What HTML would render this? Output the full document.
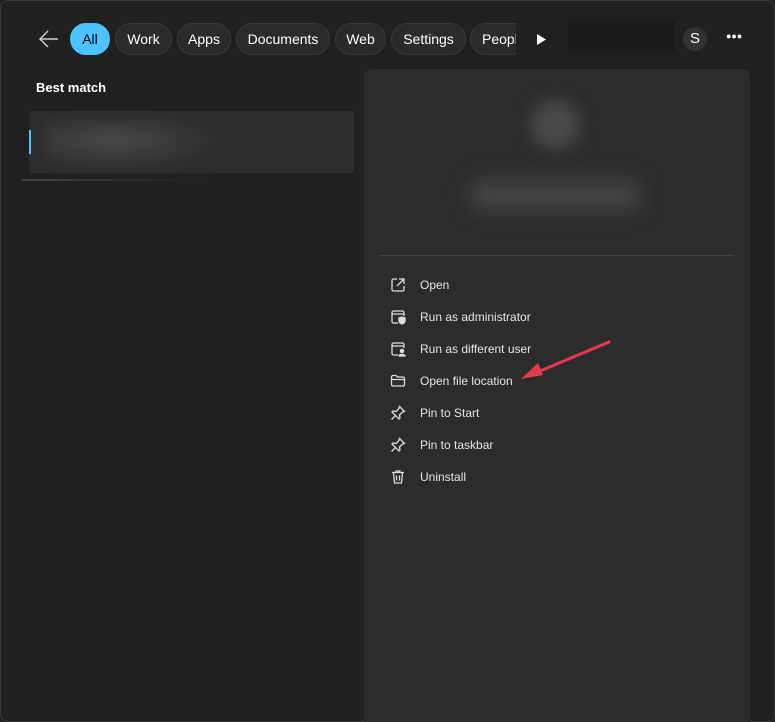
<!DOCTYPE html>
<html style="overflow:hidden"><head><style>
*{margin:0;padding:0;box-sizing:border-box}
html,body{width:775px;height:722px;overflow:hidden}
body{background:#202020;font-family:"Liberation Sans",sans-serif;position:relative;color:#fff}
.chip{position:absolute;top:23px;height:32px;border:1px solid #3a3a3a;background:#2b2b2b;border-radius:16px;font-size:14px;line-height:30px;text-align:center;color:#fff}
.item{position:absolute;left:390px;font-size:12px;color:#e6e6e6;height:20px;line-height:20px}
.item span{position:absolute;left:30px;white-space:nowrap}
.item svg{position:absolute;left:0;top:2px}
</style></head><body>
<div style="position:absolute;left:0;top:0;width:775px;height:722px;border:1px solid #3a3a3a;border-radius:8px"></div>
<svg style="position:absolute;left:38px;top:29px" width="22" height="20" viewBox="0 0 22 20"><path d="M20 10H3M10 2L2 10l8 8" fill="none" stroke="#ccc" stroke-width="1.5"/></svg>
<div class="chip" style="left:70px;width:40px;background:#4cc2ff;border-color:#4cc2ff;color:#000">All</div>
<div class="chip" style="left:115px;width:57px">Work</div>
<div class="chip" style="left:177px;width:54px">Apps</div>
<div class="chip" style="left:236px;width:94px">Documents</div>
<div class="chip" style="left:335px;width:51px">Web</div>
<div class="chip" style="left:391px;width:75px">Settings</div>
<div class="chip" style="left:470px;width:60px;text-align:left;padding-left:11px">People</div>
<div style="position:absolute;left:516px;top:20px;width:50px;height:36px;background:#202020"></div>
<svg style="position:absolute;left:536px;top:33px" width="12" height="13"><path d="M1 1L10 6.5L1 12Z" fill="#fff"/></svg>
<div style="position:absolute;left:568px;top:20px;width:107px;height:33px;background:#1b1b1b"></div>
<div style="position:absolute;left:683px;top:27px;width:24px;height:24px;border-radius:12px;background:#333;font-size:15px;line-height:24px;text-align:center">S</div>
<div style="position:absolute;left:726px;top:31px;font-size:9px;letter-spacing:0px">●●●</div>
<div style="position:absolute;left:36px;top:80px;font-size:13px;font-weight:bold">Best match</div>
<div style="position:absolute;left:29px;top:111px;width:325px;height:62px;background:#2d2d2d;border-radius:4px"></div>
<div style="position:absolute;left:45px;top:120px;width:170px;height:50px;background:radial-gradient(ellipse at 40% 40%,#4a4a4a,#2d2d2d 75%);filter:blur(6px)"></div>
<div style="position:absolute;left:29px;top:130px;width:2px;height:24px;background:#4cc2ff"></div>
<div style="position:absolute;left:22px;top:179px;width:170px;height:2px;background:linear-gradient(90deg,#444,#202020)"></div>
<div style="position:absolute;left:364px;top:69px;width:386px;height:653px;background:#2c2c2c;border-radius:8px 8px 0 0"></div>
<div style="position:absolute;left:530px;top:100px;width:50px;height:50px;border-radius:25px;background:#4a4a4a;filter:blur(8px)"></div>
<div style="position:absolute;left:470px;top:180px;width:170px;height:30px;border-radius:10px;background:#454545;filter:blur(10px)"></div>
<div style="position:absolute;left:380px;top:255px;width:354px;height:1px;background:#444"></div>
<div class="item" style="top:275px"><svg width="16" height="16" viewBox="0 0 16 16" fill="none" stroke="#ddd" stroke-width="1.3"><path d="M7 2H3.5A1.5 1.5 0 0 0 2 3.5v9A1.5 1.5 0 0 0 3.5 14h9a1.5 1.5 0 0 0 1.5-1.5V9M9 2h5v5M14 2L7 9"/></svg><span>Open</span></div>
<div class="item" style="top:307px"><svg width="16" height="16" viewBox="0 0 16 16" fill="none" stroke="#ddd" stroke-width="1.3"><path d="M8 14H3.5A1.5 1.5 0 0 1 2 12.5v-9A1.5 1.5 0 0 1 3.5 2h9A1.5 1.5 0 0 1 14 3.5V7M2 5h12"/><path d="M9 9l3-1 3 1v3c0 2-3 3-3 3s-3-1-3-3z" fill="#ddd"/></svg><span>Run as administrator</span></div>
<div class="item" style="top:339px"><svg width="16" height="16" viewBox="0 0 16 16" fill="none" stroke="#ddd" stroke-width="1.3"><path d="M8 14H3.5A1.5 1.5 0 0 1 2 12.5v-9A1.5 1.5 0 0 1 3.5 2h9A1.5 1.5 0 0 1 14 3.5V7M2 5h12"/><circle cx="12" cy="10" r="1.6" fill="#ddd"/><path d="M9 15c0-2 6-2 6 0z" fill="#ddd"/></svg><span>Run as different user</span></div>
<div class="item" style="top:371px"><svg width="16" height="16" viewBox="0 0 16 16" fill="none" stroke="#ddd" stroke-width="1.3"><path d="M1.5 4A1.5 1.5 0 0 1 3 2.5h3l1.5 1.5H13A1.5 1.5 0 0 1 14.5 5.5v6A1.5 1.5 0 0 1 13 13H3a1.5 1.5 0 0 1-1.5-1.5zM1.5 6.5h13"/></svg><span>Open file location</span></div>
<div class="item" style="top:403px"><svg width="16" height="16" viewBox="0 0 16 16" fill="none" stroke="#ddd" stroke-width="1.3"><path d="M9.5 1.5l5 5-2 .5-3 3 .5 3-1 1-7-7 1-1 3 .5 3-3z M5 11l-3.5 3.5"/></svg><span>Pin to Start</span></div>
<div class="item" style="top:435px"><svg width="16" height="16" viewBox="0 0 16 16" fill="none" stroke="#ddd" stroke-width="1.3"><path d="M9.5 1.5l5 5-2 .5-3 3 .5 3-1 1-7-7 1-1 3 .5 3-3z M5 11l-3.5 3.5"/></svg><span>Pin to taskbar</span></div>
<div class="item" style="top:467px"><svg width="16" height="16" viewBox="0 0 16 16" fill="none" stroke="#ddd" stroke-width="1.3"><path d="M2 3.5h12M6 3.5V2h4v1.5M3.5 3.5l1 10.5h7l1-10.5M6.5 6.5v5M9.5 6.5v5"/></svg><span>Uninstall</span></div>
<svg style="position:absolute;left:515px;top:338px" width="100" height="45"><path d="M94 4L18 36" stroke="#e8384f" stroke-width="3" stroke-linecap="round"/><path d="M6 41L23 25L28 37Z" fill="#e8384f"/></svg>
</body></html>
